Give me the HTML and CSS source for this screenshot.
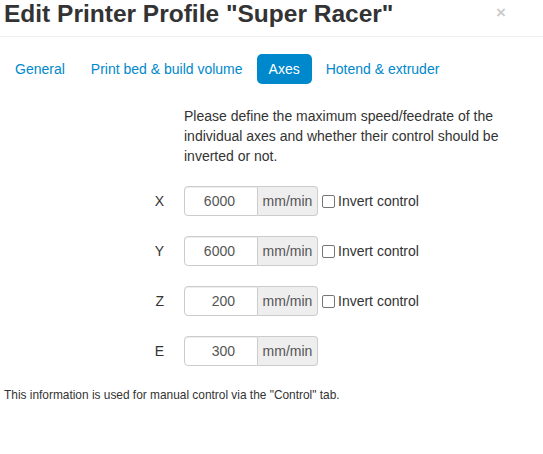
FILE: index.html
```html
<!DOCTYPE html>
<html>
<head>
<meta charset="utf-8">
<link rel="stylesheet" href="styles.css">
</head>
<body>
<div class="modal">
  <div class="modal-header">
    <h3 class="title">Edit Printer Profile "Super Racer"</h3>
    <span class="close">×</span>
  </div>
  <div class="modal-body">
    <ul class="pills">
      <li><a>General</a></li>
      <li><a>Print bed &amp; build volume</a></li>
      <li class="active"><a>Axes</a></li>
      <li><a>Hotend &amp; extruder</a></li>
    </ul>
    <form class="form">
      <div class="group">
        <div class="controls offset">
          <p class="intro">Please define the maximum speed/feedrate of the individual axes and whether their control should be inverted or not.</p>
        </div>
      </div>
      <div class="group">
        <label class="label">X</label>
        <div class="controls">
          <div class="input-append"><span class="input">6000</span><span class="addon">mm/min</span></div>
          <label class="check"><span class="box"></span>Invert control</label>
        </div>
      </div>
      <div class="group">
        <label class="label">Y</label>
        <div class="controls">
          <div class="input-append"><span class="input">6000</span><span class="addon">mm/min</span></div>
          <label class="check"><span class="box"></span>Invert control</label>
        </div>
      </div>
      <div class="group">
        <label class="label">Z</label>
        <div class="controls">
          <div class="input-append"><span class="input">200</span><span class="addon">mm/min</span></div>
          <label class="check"><span class="box"></span>Invert control</label>
        </div>
      </div>
      <div class="group">
        <label class="label">E</label>
        <div class="controls">
          <div class="input-append"><span class="input">300</span><span class="addon">mm/min</span></div>
        </div>
      </div>
    </form>
    <p class="help">This information is used for manual control via the "Control" tab.</p>
  </div>
</div>
</body>
</html>
```
FILE: styles.css
```css
html, body {
  margin: 0;
  padding: 0;
  background: #fff;
}
body {
  font-family: "Liberation Sans", Arial, sans-serif;
  font-size: 14px;
  line-height: 20px;
  color: #333;
}
.modal-header {
  display: flex;
  justify-content: space-between;
  align-items: flex-start;
  height: 37px;
  box-sizing: border-box;
  border-bottom: 1px solid #eee;
  padding: 0 0 0 4px;
}
.title {
  margin: 0;
  font-size: 24.5px;
  line-height: 28px;
  font-weight: bold;
  color: #333;
}
.close {
  font-size: 17px;
  line-height: 16px;
  font-weight: bold;
  color: #000;
  opacity: 0.2;
  margin: 5px 37px 0 0;
}
.modal-body {
  padding: 17px 4px 0 4px;
}
.pills {
  list-style: none;
  margin: 0 0 22px -1px;
  padding: 0;
  display: flex;
}
.pills li a {
  display: block;
  padding: 8px 12px;
  line-height: 14px;
  margin-right: 2px;
  border-radius: 5px;
  color: #0088cc;
}
.pills li.active a {
  background: #0088cc;
  color: #fff;
}
.group {
  display: flex;
  margin-bottom: 20px;
}
.label {
  width: 160px;
  flex: none;
  text-align: right;
  padding-top: 5px;
  margin-right: 20px;
}
.controls {
  display: flex;
  align-items: center;
}
.offset {
  margin-left: 180px;
}
.intro {
  margin: 0;
  width: 335px;
}
.input-append {
  display: flex;
}
.input {
  display: block;
  width: 74px;
  box-sizing: border-box;
  height: 30px;
  padding: 4px 22px 4px 6px;
  text-align: right;
  border: 1px solid #ccc;
  border-radius: 4px 0 0 4px;
  color: #555;
  box-shadow: inset 0 1px 1px rgba(0,0,0,0.075);
}
.addon {
  display: block;
  height: 30px;
  box-sizing: border-box;
  padding: 4px 4px;
  background: #eee;
  border: 1px solid #ccc;
  border-left: none;
  border-radius: 0 4px 4px 0;
  color: #555;
  min-width: 60px;
  text-align: center;
}
.check {
  display: flex;
  align-items: center;
  margin-left: 4px;
}
.box {
  display: block;
  width: 11px;
  height: 11px;
  border: 1px solid #767676;
  border-radius: 2px;
  margin-right: 3px;
}
.help {
  margin: 2px 0 0 0;
  font-size: 11.9px;
  line-height: 18px;
}
```
